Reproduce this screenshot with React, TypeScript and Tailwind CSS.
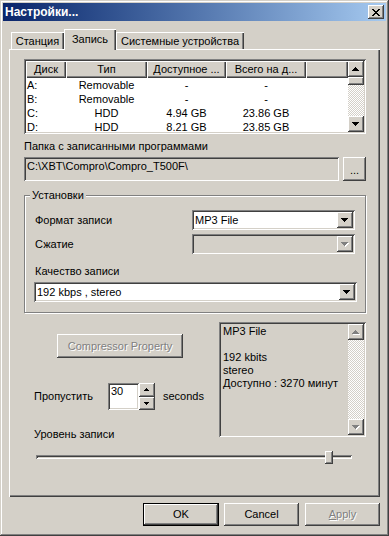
import type { ReactNode } from 'react'

// classic 3D bevels, drawn with inset shadows so they take no room
const RAISED =
  'shadow-[inset_-1px_-1px_#404040,inset_1px_1px_#ffffff,inset_-2px_-2px_#808080,inset_2px_2px_#d4d0c8]'
const SUNKEN =
  'shadow-[inset_1px_1px_#808080,inset_-1px_-1px_#ffffff,inset_2px_2px_#404040,inset_-2px_-2px_#d4d0c8]'
const DISABLED_TEXT = 'text-[#808080] [text-shadow:1px_1px_0_#ffffff]'
const CHECKER =
  'bg-[image:repeating-conic-gradient(#ffffff_0_25%,#d4d0c8_0_50%)] bg-[length:2px_2px]'

const columns = [
  { label: 'Диск', width: 'w-[40px]' },
  { label: 'Тип', width: 'w-[81px]' },
  { label: 'Доступное ...', width: 'w-[79px]' },
  { label: 'Всего на д...', width: 'w-[80px]' },
]

const drives = [
  ['A:', 'Removable', '-', '-'],
  ['B:', 'Removable', '-', '-'],
  ['C:', 'HDD', '4.94 GB', '23.86 GB'],
  ['D:', 'HDD', '8.21 GB', '23.85 GB'],
]

function Arrow({ dir, small, disabled }: { dir: 'up' | 'down'; small?: boolean; disabled?: boolean }) {
  const rows = small ? [1, 3, 5] : [1, 3, 5, 7]
  const w = small ? 5 : 7
  const h = rows.length
  const draw = (fill: string, off: number) =>
    rows.map((rw, i) => (
      <rect
        key={fill + i}
        x={(w - rw) / 2 + off}
        y={(dir === 'up' ? i : h - 1 - i) + off}
        width={rw}
        height={1}
        fill={fill}
      />
    ))
  return (
    <svg width={w + 1} height={h + 1} shapeRendering="crispEdges" className="block">
      {disabled && draw('#ffffff', 1)}
      {draw(disabled ? '#808080' : '#000000', 0)}
    </svg>
  )
}

function ArrowBtn({
  dir,
  small,
  disabled,
  className,
}: {
  dir: 'up' | 'down'
  small?: boolean
  disabled?: boolean
  className: string
}) {
  return (
    <div className={`${RAISED} bg-[#d4d0c8] flex items-center justify-center shrink-0 ${className}`}>
      <Arrow dir={dir} small={small} disabled={disabled} />
    </div>
  )
}

function Combo({ value, disabled, className }: { value?: string; disabled?: boolean; className: string }) {
  return (
    <div
      className={`${SUNKEN} ${disabled ? 'bg-[#d4d0c8]' : 'bg-white'} h-[20px] flex items-center p-[2px] ${className}`}
    >
      <span className="flex-1 pl-[1px] leading-[16px] whitespace-nowrap">{value}</span>
      <ArrowBtn dir="down" disabled={disabled} className="w-[16px] h-[16px]" />
    </div>
  )
}

function Button({ children, className }: { children: ReactNode; className: string }) {
  return (
    <div className={`bg-[#d4d0c8] flex items-center justify-center shrink-0 ${className}`}>{children}</div>
  )
}

function CloseGlyph() {
  const rows = [
    [0, 6],
    [1, 5],
    [2, 4],
    [3],
    [2, 4],
    [1, 5],
    [0, 6],
  ]
  return (
    <svg width={8} height={7} shapeRendering="crispEdges" className="block">
      {rows.map((xs, y) =>
        xs.map((x) => <rect key={`${y}-${x}`} x={x} y={y} width={2} height={1} fill="#000000" />),
      )}
    </svg>
  )
}

export default function App() {
  return (
    <div className="w-[389px] h-[536px] bg-[#d4d0c8] p-[3px] flex flex-col overflow-hidden font-['Liberation_Sans',Arial,sans-serif] text-[11px] text-black shadow-[inset_-1px_-1px_#404040,inset_1px_1px_#d4d0c8,inset_-2px_-2px_#808080,inset_2px_2px_#ffffff]">
      {/* title bar */}
      <div className="h-[18px] flex items-center bg-linear-to-r from-[#0a246a] to-[#a6caf0]">
        <span className="pl-[2px] flex-1 text-white font-bold text-[12px] leading-[14px]">Настройки...</span>
        <div className={`${RAISED} bg-[#d4d0c8] w-[16px] h-[14px] mr-[2px] flex items-center justify-center`}>
          <CloseGlyph />
        </div>
      </div>

      {/* tabs */}
      <div className="mt-[8px] ml-[6px] h-[20px] flex items-end">
        <div className="ml-[2px] w-[53px] h-[17px] pt-[2px] flex items-center justify-center shadow-[inset_1px_1px_#ffffff,inset_-1px_0_#404040,inset_-2px_0_#808080]">
          Станция
        </div>
        <div className="relative z-10 -mb-[1px] w-[52px] h-[21px] pb-[1px] flex items-center justify-center bg-[#d4d0c8] shadow-[inset_1px_1px_#ffffff,inset_-1px_0_#404040,inset_-2px_0_#808080]">
          Запись
        </div>
        <div className="w-[128px] h-[17px] pt-[2px] flex items-center justify-center shadow-[inset_1px_1px_#ffffff,inset_-1px_0_#404040,inset_-2px_0_#808080]">
          Системные устройства
        </div>
      </div>

      {/* tab panel */}
      <div className="ml-[6px] w-[371px] h-[448px] pl-[15px] pt-[10px] flex flex-col shadow-[inset_1px_1px_#ffffff,inset_-1px_-1px_#404040,inset_-2px_-2px_#808080]">
        {/* drive list */}
        <div className={`${SUNKEN} bg-white w-[342px] h-[75px] p-[2px] flex`}>
          <div className="flex-1 flex flex-col overflow-hidden">
            <div className="h-[17px] flex shrink-0">
              {columns.map((c) => (
                <div
                  key={c.label}
                  className={`${c.width} bg-[#d4d0c8] flex items-center justify-center whitespace-nowrap shadow-[inset_1px_1px_#ffffff,inset_-1px_-1px_#404040,inset_-2px_-2px_#808080]`}
                >
                  {c.label}
                </div>
              ))}
              <div className="flex-1 bg-[#d4d0c8] shadow-[inset_1px_1px_#ffffff,inset_-1px_-1px_#404040,inset_-2px_-2px_#808080]" />
            </div>
            {drives.map((d) => (
              <div key={d[0]} className="h-[14px] flex items-center shrink-0 leading-[14px]">
                <span className="w-[40px] pl-[1px]">{d[0]}</span>
                <span className="w-[81px] text-center">{d[1]}</span>
                <span className="w-[79px] text-center">{d[2]}</span>
                <span className="w-[80px] text-center">{d[3]}</span>
              </div>
            ))}
          </div>
          <div className="w-[16px] flex flex-col">
            <ArrowBtn dir="up" className="h-[16px]" />
            <div className={`${RAISED} bg-[#d4d0c8] h-[8px] shrink-0`} />
            <div className={`flex-1 ${CHECKER}`} />
            <ArrowBtn dir="down" className="h-[16px]" />
          </div>
        </div>

        {/* recordings folder */}
        <div className="mt-[6px] h-[13px] leading-[13px]">Папка с записанными программами</div>
        <div className="mt-[4px] flex h-[24px]">
          <div className={`${SUNKEN} w-[315px] pl-[3px] pt-[2px] leading-[14px] bg-[#d4d0c8]`}>
            C:\XBT\Compro\Compro_T500F\
          </div>
          <Button className={`${RAISED} ml-[4px] w-[23px] pt-[2px]`}>...</Button>
        </div>

        {/* settings group */}
        <div className="relative mt-[14px] w-[342px] h-[118px] pl-[9px] pr-[10px] pt-[14px] border border-[#808080] shadow-[inset_1px_1px_#ffffff,1px_1px_#ffffff]">
          <span className="absolute -top-[7px] left-[5px] px-[2px] bg-[#d4d0c8] leading-[13px]">Установки</span>
          <div className="flex items-center">
            <span className="flex-1 pl-[1px]">Формат записи</span>
            <Combo value="MP3 File" className="w-[163px]" />
          </div>
          <div className="mt-[4px] flex items-center">
            <span className="flex-1 pl-[1px]">Сжатие</span>
            <Combo disabled className="w-[163px]" />
          </div>
          <div className="mt-[11px] pl-[1px] h-[13px] leading-[13px]">Качество записи</div>
          <Combo value="192 kbps , stereo" className="mt-[4px] w-[323px]" />
        </div>

        {/* lower controls */}
        <div className="flex">
          <div className="w-[195px] flex flex-col">
            <Button className={`${RAISED} mt-[21px] ml-[33px] w-[126px] h-[24px]`}>
              <span className={DISABLED_TEXT}>Compressor Property</span>
            </Button>
            <div className="mt-[25px] h-[27px] flex items-center">
              <span className="w-[84px] pl-[10px]">Пропустить</span>
              <div className={`${SUNKEN} bg-white w-[31px] h-[27px] pl-[3px] pt-[1px] leading-[14px]`}>30</div>
              <div className="w-[16px] h-[27px] flex flex-col">
                <ArrowBtn dir="up" small className="h-[14px]" />
                <ArrowBtn dir="down" small className="h-[13px]" />
              </div>
              <span className="ml-[8px]">seconds</span>
            </div>
            <div className="mt-[18px] pl-[10px] h-[13px] leading-[13px]">Уровень записи</div>
          </div>
          <div className={`${SUNKEN} mt-[9px] w-[147px] h-[115px] p-[2px] flex`}>
            <div className="flex-1 pl-[2px] pt-[1px] leading-[13px]">
              <div>MP3 File</div>
              <div className="h-[13px]" />
              <div>192 kbits</div>
              <div>stereo</div>
              <div>Доступно : 3270 минут</div>
            </div>
            <div className="w-[16px] flex flex-col">
              <ArrowBtn dir="up" disabled className="h-[16px]" />
              <div className={`flex-1 ${CHECKER}`} />
              <ArrowBtn dir="down" disabled className="h-[16px]" />
            </div>
          </div>
        </div>

        {/* recording level slider */}
        <div className="relative mt-[10px] ml-[12px] w-[316px] h-[13px]">
          <div className={`${SUNKEN} mt-[4px] h-[4px]`} />
          <div className={`${RAISED} absolute top-0 left-[289px] w-[8px] h-[13px] bg-[#d4d0c8]`} />
        </div>
      </div>

      {/* dialog buttons */}
      <div className="mt-[6px] pl-[140px] flex h-[23px]">
        <Button className="w-[76px] shadow-[inset_0_0_0_1px_#000000,inset_-2px_-2px_#404040,inset_2px_2px_#ffffff,inset_-3px_-3px_#808080]">
          OK
        </Button>
        <Button className={`${RAISED} ml-[5px] w-[75px]`}>Cancel</Button>
        <Button className={`${RAISED} ml-[6px] w-[75px]`}>
          <span className={DISABLED_TEXT}>
            <span className="underline">A</span>pply
          </span>
        </Button>
      </div>
    </div>
  )
}
